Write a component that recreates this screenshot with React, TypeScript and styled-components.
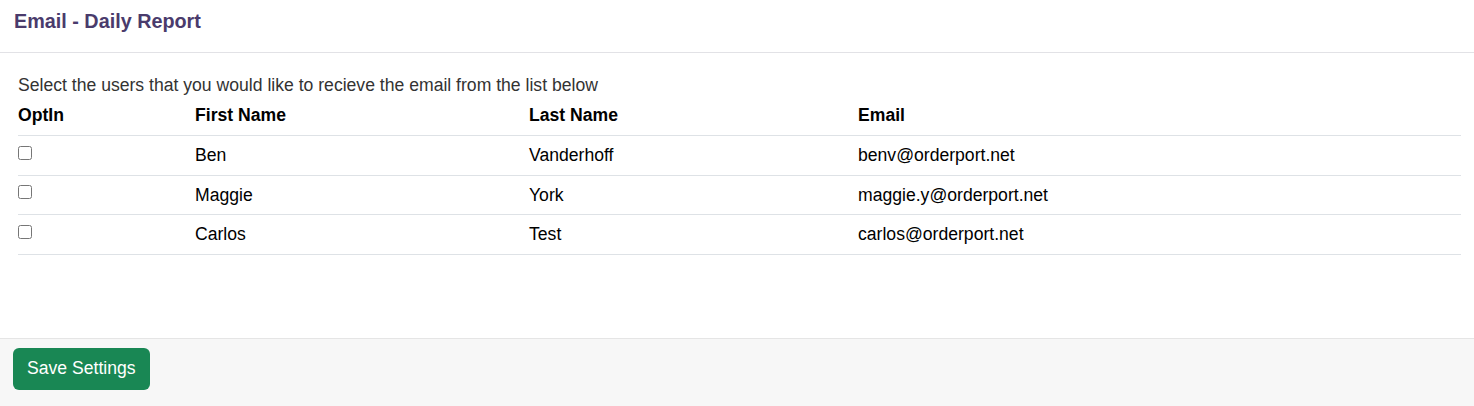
import React from 'react';
import styled, { createGlobalStyle } from 'styled-components';

const GlobalStyle = createGlobalStyle`
  html, body {
    margin: 0;
    padding: 0;
    background: #fff;
    font-family: "Liberation Sans", Arial, sans-serif;
    color: #212529;
  }
`

const Card = styled.div`
  display: flex;
  flex-direction: column;
  width: 100%;
`

const CardHeader = styled.div`
  padding: 9px 14px 0 14px;
  height: 43px;
  border-bottom: 1px solid #e2e2e6;
`

const Title = styled.h3`
  margin: 0;
  font-size: 19.8px;
  line-height: 24px;
  font-weight: bold;
  color: #4a3b6c;
`

const CardBody = styled.div`
  padding: 20px 13px 83px 18px;
`

const Intro = styled.p`
  margin: 0;
  font-size: 17.6px;
  line-height: 24px;
  color: #333;
`

const Table = styled.table`
  width: 100%;
  border-collapse: collapse;
  table-layout: fixed;
  font-size: 17.6px;
  line-height: 24px;
  color: #000;
`

const HeadCell = styled.th`
  text-align: left;
  font-weight: bold;
  padding: 6px 0 8px 0;
  border-bottom: 1px solid #dee2e6;
`

const Cell = styled.td`
  padding: 7.3px 0;
  border-bottom: 1px solid #dee2e6;
  vertical-align: top;
`

const Check = styled.input`
  margin: 2.5px 0 0 0;
  width: 14px;
  height: 14px;
  display: block;
`

const CardFooter = styled.div`
  background: #f7f7f7;
  border-top: 1px solid #e5e5e5;
  padding: 9px 13px 16px 13px;
`

const Button = styled.button`
  height: 42px;
  padding: 0 14px;
  border: none;
  border-radius: 6px;
  background: #198754;
  color: #fff;
  font-family: "Liberation Sans", Arial, sans-serif;
  font-size: 17.6px;
  cursor: pointer;
`

const users = [
    { first: 'Ben', last: 'Vanderhoff', email: 'benv@orderport.net' },
    { first: 'Maggie', last: 'York', email: 'maggie.y@orderport.net' },
    { first: 'Carlos', last: 'Test', email: 'carlos@orderport.net' },
]

export default function App () {
    return (
        <>
            <GlobalStyle/>
            <Card>
                <CardHeader>
                    <Title>Email - Daily Report</Title>
                </CardHeader>
                <CardBody>
                    <Intro>Select the users that you would like to recieve the email from the list below</Intro>
                    <Table>
                        <colgroup>
                            <col style={{ width: 177 }}/>
                            <col style={{ width: 334 }}/>
                            <col style={{ width: 329 }}/>
                            <col/>
                        </colgroup>
                        <thead>
                            <tr>
                                <HeadCell>OptIn</HeadCell>
                                <HeadCell>First Name</HeadCell>
                                <HeadCell>Last Name</HeadCell>
                                <HeadCell>Email</HeadCell>
                            </tr>
                        </thead>
                        <tbody>
                            {users.map(u => (
                                <tr key={u.email}>
                                    <Cell><Check type="checkbox"/></Cell>
                                    <Cell>{u.first}</Cell>
                                    <Cell>{u.last}</Cell>
                                    <Cell>{u.email}</Cell>
                                </tr>
                            ))}
                        </tbody>
                    </Table>
                </CardBody>
                <CardFooter>
                    <Button>Save Settings</Button>
                </CardFooter>
            </Card>
        </>
    )
}
